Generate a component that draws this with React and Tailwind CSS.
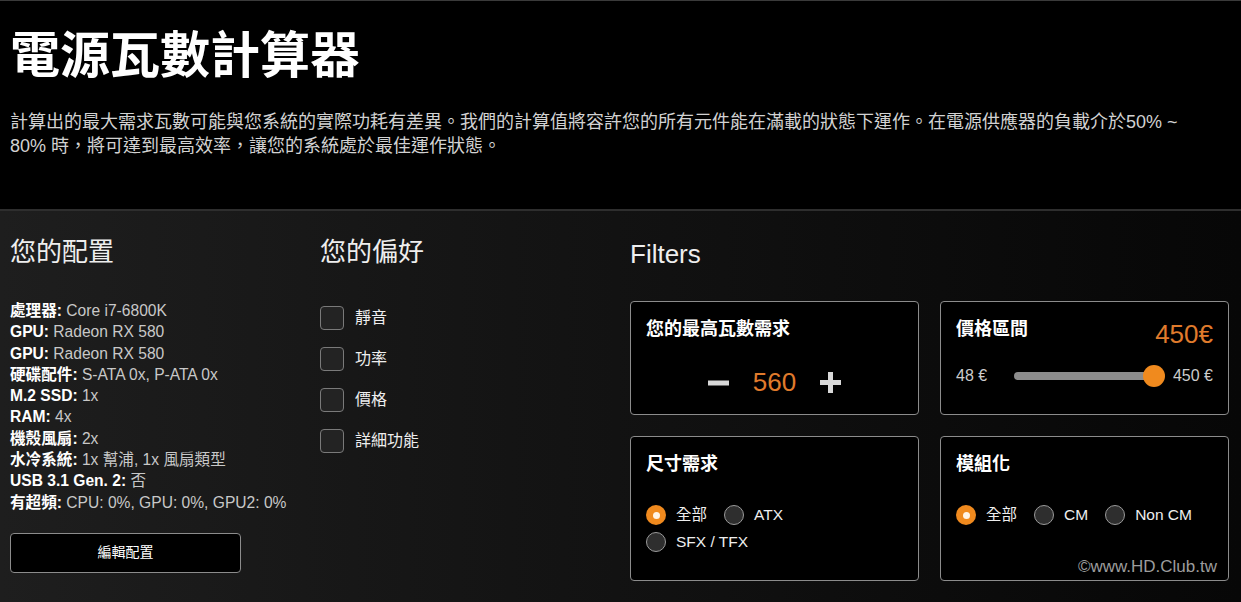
import React from "react";

const configItems = [
  { label: "處理器:", value: "Core i7-6800K" },
  { label: "GPU:", value: "Radeon RX 580" },
  { label: "GPU:", value: "Radeon RX 580" },
  { label: "硬碟配件:", value: "S-ATA 0x, P-ATA 0x" },
  { label: "M.2 SSD:", value: "1x" },
  { label: "RAM:", value: "4x" },
  { label: "機殼風扇:", value: "2x" },
  { label: "水冷系統:", value: "1x 幫浦, 1x 風扇類型" },
  { label: "USB 3.1 Gen. 2:", value: "否" },
  { label: "有超頻:", value: "CPU: 0%, GPU: 0%, GPU2: 0%" },
];

const preferences = ["靜音", "功率", "價格", "詳細功能"];

function Radio({ checked, label }) {
  return (
    <label className="flex items-center gap-[10px]">
      {checked ? (
        <span className="flex h-5 w-5 items-center justify-center rounded-full bg-[#f08a1e]">
          <span className="h-[7px] w-[7px] rounded-full bg-[#fff4e6]" />
        </span>
      ) : (
        <span className="h-5 w-5 rounded-full border border-[#9a9a9a] bg-[#2e2e2e]" />
      )}
      <span className="text-[15.5px] leading-[24px] text-[#eeeeee]">{label}</span>
    </label>
  );
}

function Card({ className = "", children }) {
  return (
    <div className={`relative rounded-[4px] border border-[#8c8c8c] bg-black px-[15px] pt-[15px] ${className}`}>
      {children}
    </div>
  );
}

function CardTitle({ children }) {
  return <h3 className="text-[18px] font-bold leading-[24px] text-white">{children}</h3>;
}

export default function App() {
  return (
    <div className="flex min-h-screen flex-col bg-black font-['Liberation_Sans','Noto_Sans_CJK_TC',sans-serif]">
      <header className="border-t border-b-2 border-t-[#3a3a3a] border-b-[#2e2e2e] bg-black px-[10px] pt-[25px] pb-[51px]">
        <h1 className="text-[50px] font-bold leading-[60px] text-white">電源瓦數計算器</h1>
        <p className="mt-[24px] max-w-[1190px] text-[18px] leading-[24px] text-[#d2d2d2]">
          計算出的最大需求瓦數可能與您系統的實際功耗有差異。我們的計算值將容許您的所有元件能在滿載的狀態下運作。在電源供應器的負載介於50% ~ 80% 時，將可達到最高效率，讓您的系統處於最佳運作狀態。
        </p>
      </header>

      <main className="grid flex-1 grid-cols-[300px_300px_1fr] gap-x-[10px] bg-linear-to-r from-[#1e1e1e] to-[#070707] pl-[10px] pr-[12px] pt-[25px]">
        <section>
          <h2 className="text-[26px] leading-[32px] text-[#eeeeee]">您的配置</h2>
          <ul className="mt-[32px] text-[15.6px] leading-[21.3px]">
            {configItems.map((item, i) => (
              <li key={i} className="whitespace-nowrap">
                <span className="font-bold text-white">{item.label}</span>{" "}
                <span className="text-[#c8c8c8]">{item.value}</span>
              </li>
            ))}
          </ul>
          <button
            type="button"
            className="mt-[20px] h-[40px] w-[231px] rounded-[4px] border border-[#8c8c8c] bg-black text-[14px] text-white"
          >
            編輯配置
          </button>
        </section>

        <section>
          <h2 className="text-[26px] leading-[32px] text-[#eeeeee]">您的偏好</h2>
          <div className="mt-[38px] flex flex-col gap-y-[17px]">
            {preferences.map((p) => (
              <label key={p} className="flex h-6 items-center gap-[11px]">
                <span className="h-6 w-6 rounded-[4px] border border-[#7a7a7a] bg-[#232323]" />
                <span className="text-[16px] text-[#eeeeee]">{p}</span>
              </label>
            ))}
          </div>
        </section>

        <section>
          <h2 className="pt-[2px] text-[26px] leading-[32px] text-[#eeeeee]">Filters</h2>
          <div className="mt-[31px] grid grid-cols-2 gap-[21px]">
            <Card className="h-[114px]">
              <CardTitle>您的最高瓦數需求</CardTitle>
              <div className="mt-[25px] flex h-[32px] items-center justify-center gap-[24px]">
                <svg width="21" height="21" viewBox="0 0 21 21">
                  <line x1="0" y1="11" x2="21" y2="11" stroke="#d8d8d8" strokeWidth="5" />
                </svg>
                <span className="text-[26px] leading-[32px] text-[#e07b2c]">560</span>
                <svg width="21" height="21" viewBox="0 0 21 21">
                  <line x1="0" y1="10.5" x2="21" y2="10.5" stroke="#d8d8d8" strokeWidth="5" />
                  <line x1="10.5" y1="0" x2="10.5" y2="21" stroke="#d8d8d8" strokeWidth="5" />
                </svg>
              </div>
            </Card>

            <Card className="h-[114px]">
              <div className="flex items-start justify-between">
                <CardTitle>價格區間</CardTitle>
                <span className="mt-[1px] text-[26px] leading-[32px] text-[#e07b2c]">450€</span>
              </div>
              <div className="mt-[14px] flex h-6 items-center">
                <span className="text-[16px] text-[#cccccc]">48 €</span>
                <div className="relative ml-[27px] mr-[14px] h-[8px] flex-1 rounded-full bg-[#8c8c8c]">
                  <span className="absolute right-[-6px] top-1/2 h-[22px] w-[22px] -translate-y-1/2 rounded-full bg-[#f08a1e]" />
                </div>
                <span className="text-[16px] text-[#cccccc]">450 €</span>
              </div>
            </Card>

            <Card className="h-[145px]">
              <CardTitle>尺寸需求</CardTitle>
              <div className="mt-[27px] flex gap-[17px]">
                <Radio checked label="全部" />
                <Radio label="ATX" />
              </div>
              <div className="mt-[3px] flex">
                <Radio label="SFX / TFX" />
              </div>
            </Card>

            <Card className="h-[145px]">
              <CardTitle>模組化</CardTitle>
              <div className="mt-[27px] flex gap-[17px]">
                <Radio checked label="全部" />
                <Radio label="CM" />
                <Radio label="Non CM" />
              </div>
              <span className="absolute bottom-[3px] right-[11px] text-[17px] leading-[20px] text-[#9c9c9c]">
                ©www.HD.Club.tw
              </span>
            </Card>
          </div>
        </section>
      </main>
    </div>
  );
}
